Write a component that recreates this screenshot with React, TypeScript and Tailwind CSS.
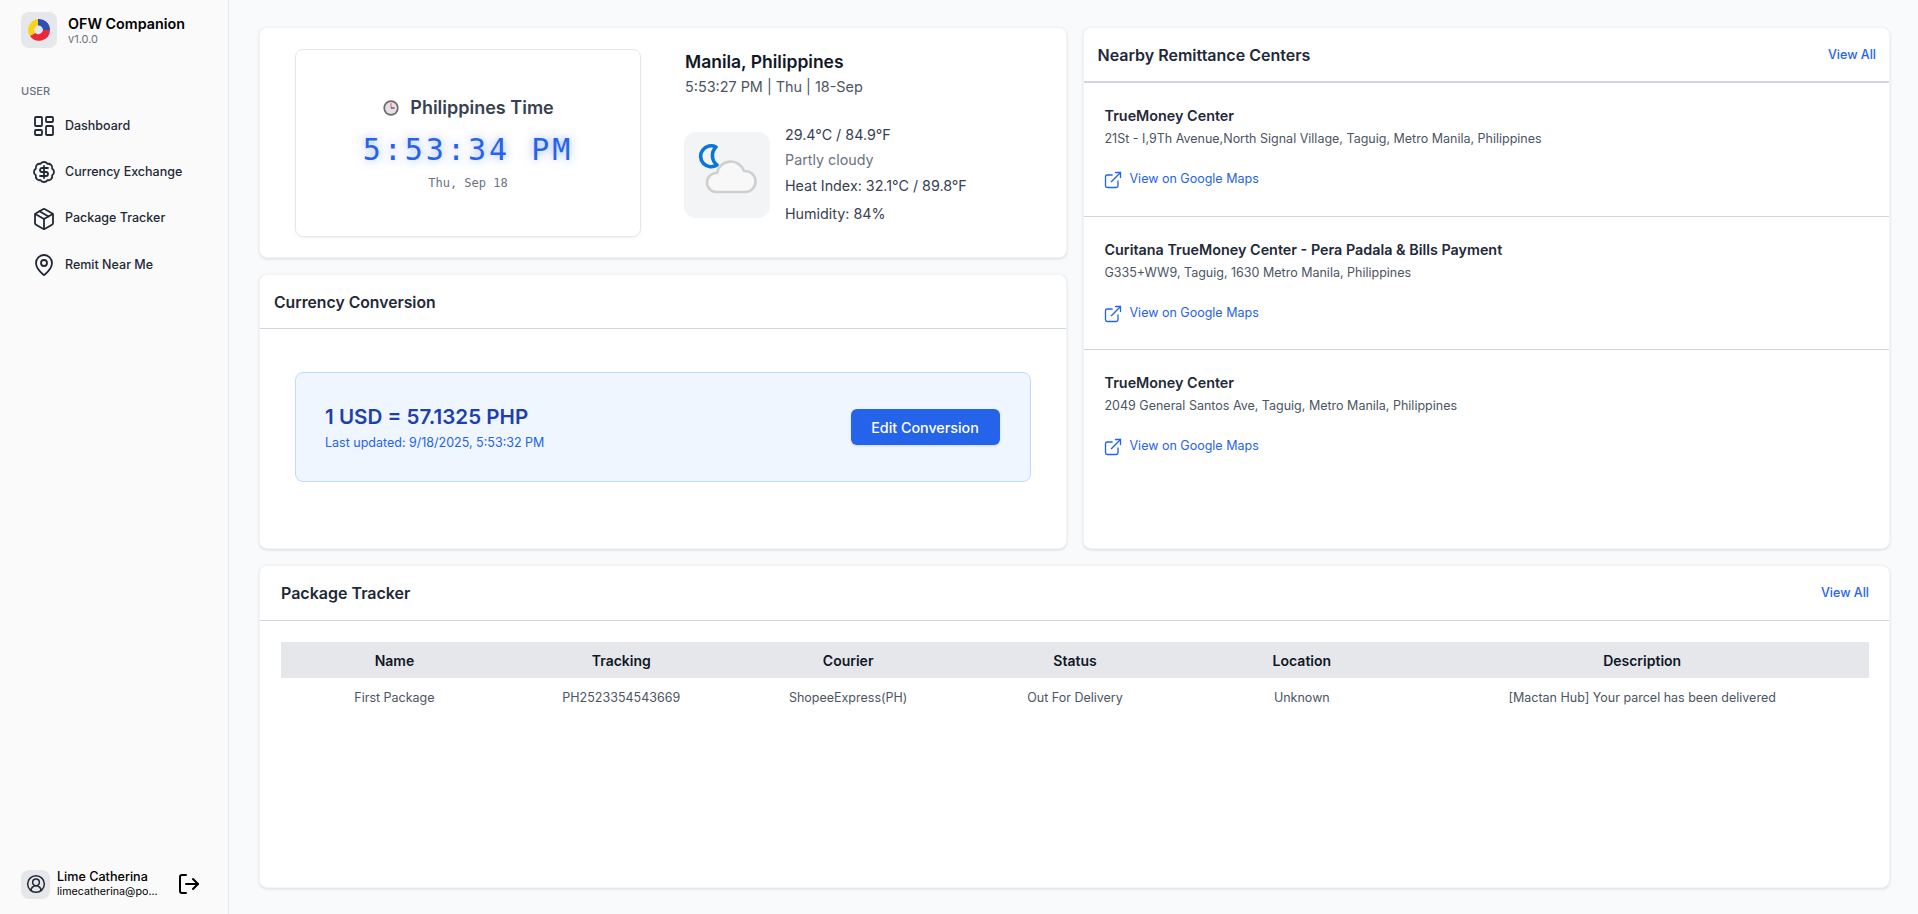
import { ExternalLink, LayoutDashboard, Package, MapPin, LogOut, CircleUserRound, BadgeDollarSign } from 'lucide-react';
import type { ReactNode } from 'react';

const navItems = [
  { label: 'Dashboard', icon: LayoutDashboard },
  { label: 'Currency Exchange', icon: BadgeDollarSign },
  { label: 'Package Tracker', icon: Package },
  { label: 'Remit Near Me', icon: MapPin },
];

const centers = [
  { name: 'TrueMoney Center', address: '21St - I,9Th Avenue,North Signal Village, Taguig, Metro Manila, Philippines' },
  { name: 'Curitana TrueMoney Center - Pera Padala & Bills Payment', address: 'G335+WW9, Taguig, 1630 Metro Manila, Philippines' },
  { name: 'TrueMoney Center', address: '2049 General Santos Ave, Taguig, Metro Manila, Philippines' },
];

const columns = [
  { label: 'Name', value: 'First Package', span: '' },
  { label: 'Tracking', value: 'PH2523354543669', span: '' },
  { label: 'Courier', value: 'ShopeeExpress(PH)', span: '' },
  { label: 'Status', value: 'Out For Delivery', span: '' },
  { label: 'Location', value: 'Unknown', span: '' },
  { label: 'Description', value: '[Mactan Hub] Your parcel has been delivered', span: 'col-span-2' },
];

const Logo = () => (
  <svg viewBox="0 0 36 36" className="h-9 w-9">
    <path d="M17 7a11 11 0 0 1 12 11h-7a4.5 4.5 0 0 0-5-4.5z" fill="#2f4fb5" />
    <path d="M17 7a11 11 0 0 0-8 17l5.5-3a4.5 4.5 0 0 1 2.5-7.500z" fill="#fcd116" />
    <path d="M9 24a11 11 0 0 0 20-6h-7a4.500 4.500 0 0 1-7.500 3z" fill="#ea2839" />
  </svg>
);

const ClockEmoji = () => (
  <svg viewBox="0 0 20 20" className="h-[18px] w-[18px]">
    <circle cx="10" cy="10" r="8.5" fill="#6b6b70" />
    <circle cx="10" cy="10" r="6.6" fill="#e6dfe6" />
    <path d="M10 4.5V10" stroke="#e0457b" strokeWidth="1" />
    <path d="M10 10h4" stroke="#333" strokeWidth="1.2" />
  </svg>
);

const WeatherIcon = () => (
  <svg viewBox="0 0 86 86" className="h-[86px] w-[86px]">
    <path
      d="M32 15A10.500 10.500 0 1 0 33 33A12 12 0 0 1 32 15z"
      fill="none"
      stroke="#0a76d8"
      strokeWidth="3.6"
      strokeLinejoin="round"
    />
    <path
      d="M32 60A9.500 9.500 0 0 1 33 41A14 14 0 0 1 60 39A10.500 10.500 0 0 1 62 60z"
      fill="#f8f8f8"
      stroke="#cfcfcf"
      strokeWidth="2.600"
      strokeLinejoin="round"
    />
  </svg>
);

const Card = ({ children, className = '' }: { children: ReactNode; className?: string }) => (
  <div className={`rounded-lg border border-gray-100 bg-white shadow-[0_1px_3px_rgba(0,0,0,0.12)] ${className}`}>
    {children}
  </div>
);

const Sidebar = () => (
  <aside className="flex h-full w-[229px] shrink-0 flex-col border-r border-gray-200 bg-[#fafafa]">
    <div className="flex items-center gap-[11px] pl-[21px] pt-[12px]">
      <div className="flex h-9 w-9 items-center justify-center rounded-lg bg-gray-200">
        <Logo />
      </div>
      <div className="-mt-[1px]">
        <div className="text-[14.3px] font-semibold leading-[20px] text-black">OFW Companion</div>
        <div className="text-[11px] leading-[11px] text-gray-500">v1.0.0</div>
      </div>
    </div>
    <div className="pl-[21px] pt-[35px] text-[11px] font-medium leading-[16px] text-gray-500">USER</div>
    <nav className="mt-[12px] flex flex-col gap-[16.4px] pl-[32px]">
      {navItems.map((item) => (
        <div key={item.label} className="flex h-[30px] items-center gap-[9px] text-[12.5px] font-medium text-[#1f2937]">
          <item.icon className="h-6 w-6 shrink-0 text-[#1f2937]" strokeWidth={1.8} />
          <span>{item.label}</span>
        </div>
      ))}
    </nav>
    <div className="mt-auto flex items-center pb-[15px] pl-[21px]">
      <div className="flex h-[29px] w-[29px] items-center justify-center rounded-lg bg-gray-200">
        <CircleUserRound className="h-5 w-5 text-[#1f2937]" strokeWidth={1.8} />
      </div>
      <div className="ml-[7px] w-[104px]">
        <div className="text-[12.6px] font-medium leading-[16px] text-black">Lime Catherina</div>
        <div className="truncate text-[10.7px] leading-[14px] text-black">limecatherina@po...</div>
      </div>
      <LogOut className="ml-[16px] h-6 w-6 text-black" strokeWidth={2} />
    </div>
  </aside>
);

const TimeCard = () => (
  <Card className="flex h-[231px] items-start pl-[35px] pt-[21px]">
    <div className="flex h-[188px] w-[346px] flex-col items-center justify-center rounded-lg border border-gray-200 shadow-[0_1px_2px_rgba(0,0,0,0.06)]">
      <div className="-mt-[1px] flex items-center gap-[10px] text-[18px] font-semibold leading-[28px] text-[#374151]">
        <ClockEmoji />
        <span>Philippines Time</span>
      </div>
      <div className="mt-[10px] font-['DejaVu_Sans_Mono',monospace] text-[30px] leading-[36px] tracking-[0.1em] text-[#2563eb] [text-shadow:0_0_10px_rgba(37,99,235,0.5)]">
        5:53:34 PM
      </div>
      <div className="mt-[7px] font-['DejaVu_Sans_Mono',monospace] text-[12px] leading-[16px] text-gray-500">Thu, Sep 18</div>
    </div>
    <div className="ml-[44px] -mt-[1px]">
      <div className="text-[17.5px] font-semibold leading-[28px] text-[#111827]">Manila, Philippines</div>
      <div className="mt-[1px] text-[14.4px] leading-[20px] text-[#4b5563]">5:53:27 PM | Thu | 18-Sep</div>
      <div className="-ml-[1px] mt-[28px] flex items-start gap-[15px]">
        <div className="mt-[7px] rounded-xl bg-[#f3f4f6]">
          <WeatherIcon />
        </div>
        <div className="text-[14.3px] text-[#374151]">
          <div className="leading-[20px]">29.4°C / 84.9°F</div>
          <div className="mt-[5px] leading-[20px] text-gray-500">Partly cloudy</div>
          <div className="mt-[6px] leading-[20px]">Heat Index: 32.1°C / 89.8°F</div>
          <div className="mt-[8px] leading-[20px]">Humidity: 84%</div>
        </div>
      </div>
    </div>
  </Card>
);

const ConversionCard = () => (
  <Card className="flex-1">
    <div className="flex h-[54px] items-center border-b border-gray-300 pl-[14px] pt-[2px] text-[15.75px] font-semibold text-[#1f2937]">
      Currency Conversion
    </div>
    <div className="mx-[35px] mt-[43px] flex h-[110px] items-center justify-between rounded-lg border border-blue-200 bg-blue-50 pl-[29px] pr-[30px]">
      <div>
        <div className="text-[20.6px] font-semibold leading-[28px] text-[#1e40af]">1 USD = 57.1325 PHP</div>
        <div className="mt-[4px] text-[12.5px] leading-[16px] text-[#2563eb]">Last updated: 9/18/2025, 5:53:32 PM</div>
      </div>
      <button className="h-[36px] w-[149px] rounded-md bg-[#2563eb] pt-[1px] text-[14.3px] font-medium text-white shadow-sm">
        Edit Conversion
      </button>
    </div>
  </Card>
);

const CentersCard = () => (
  <Card className="flex h-full flex-col">
    <div className="flex h-[55px] items-center justify-between border-b-2 border-gray-300 pl-[14px] pr-[13px]">
      <span className="text-[16px] font-semibold text-[#1f2937]">Nearby Remittance Centers</span>
      <span className="mt-[1px] text-[12.5px] font-medium text-[#2563eb]">View All</span>
    </div>
    {centers.map((center, i) => (
      <div key={i} className={`${i === 1 ? 'h-[133px]' : 'h-[134px]'} pl-[21px] pt-[23px] ${i < 2 ? 'border-b border-gray-300' : ''}`}>
        <div className="text-[14.35px] font-semibold leading-[20px] text-[#1f2937]">{center.name}</div>
        <div className="mt-[2.5px] text-[12.5px] leading-[20px] text-[#4b5563]">{center.address}</div>
        <div className="mt-[21px] -ml-[2px] flex items-center gap-[7px] text-[12.5px] text-[#2563eb]">
          <ExternalLink className="h-5 w-5" strokeWidth={1.6} />
          <span>View on Google Maps</span>
        </div>
      </div>
    ))}
  </Card>
);

const TrackerCard = () => (
  <Card className="flex-1">
    <div className="flex h-[55px] items-center justify-between border-b border-gray-300 pl-[21px] pr-[20px]">
      <span className="text-[16px] font-semibold text-[#1f2937]">Package Tracker</span>
      <span className="text-[12.5px] font-medium text-[#2563eb]">View All</span>
    </div>
    <div className="ml-[21px] mr-[20px] mt-[21px]">
      <div className="grid h-[36px] grid-cols-7 items-center bg-gray-200 text-[14px] font-semibold text-[#111827]">
        {columns.map((c) => (
          <div key={c.label} className={`${c.span} text-center`}>{c.label}</div>
        ))}
      </div>
      <div className="grid h-[40px] grid-cols-7 items-center text-[12.5px] text-[#4b5563]">
        {columns.map((c) => (
          <div key={c.label} className={`${c.span} text-center`}>{c.value}</div>
        ))}
      </div>
    </div>
  </Card>
);

export default function App() {
  return (
    <div className="flex h-[914px] w-full overflow-hidden bg-[#f8fafc] font-['Inter',sans-serif]">
      <Sidebar />
      <main className="flex min-w-0 flex-1 flex-col gap-[16px] pb-[26px] pl-[30px] pr-[28px] pt-[27px]">
        <div className="grid h-[522px] grid-cols-2 gap-[16px]">
          <div className="flex flex-col gap-[16px]">
            <TimeCard />
            <ConversionCard />
          </div>
          <CentersCard />
        </div>
        <TrackerCard />
      </main>
    </div>
  );
}
